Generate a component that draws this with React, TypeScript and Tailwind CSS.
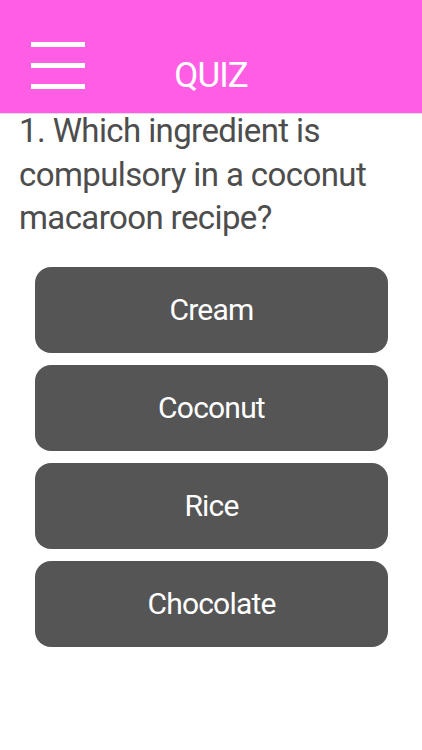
const options = ["Cream", "Coconut", "Rice", "Chocolate"];

export default function App() {
  return (
    <div className="w-[422px] h-[750px] bg-white font-['Roboto',sans-serif] overflow-hidden">
      {/* header */}
      <div className="h-[114px] bg-[#ff5de4] flex items-center relative border-b border-[#e6d9e3]">
        <div className="absolute left-[31px] top-[42px] flex flex-col gap-4">
          <span className="block w-[54px] h-[5px] bg-white" />
          <span className="block w-[54px] h-[5px] bg-white" />
          <span className="block w-[54px] h-[5px] bg-white" />
        </div>
        <h1 className="w-full text-center text-white text-[35px] leading-none pt-[38px] tracking-[-1px]">
          QUIZ
        </h1>
      </div>

      {/* question */}
      <p className="-mt-[5px] pl-[19px] pr-4 text-[#4d4d4d] text-[33px] leading-[43.5px] tracking-[-0.6px]">
        1. Which ingredient is compulsory in a coconut macaroon recipe?
      </p>

      {/* answers */}
      <div className="mt-[27px] pl-[35px] pr-[34px] flex flex-col gap-3">
        {options.map((opt) => (
          <button
            key={opt}
            className="h-[86px] w-full rounded-2xl bg-[#555555] text-white text-[30px] tracking-[-0.8px] flex items-center justify-center"
          >
            {opt}
          </button>
        ))}
      </div>
    </div>
  );
}
